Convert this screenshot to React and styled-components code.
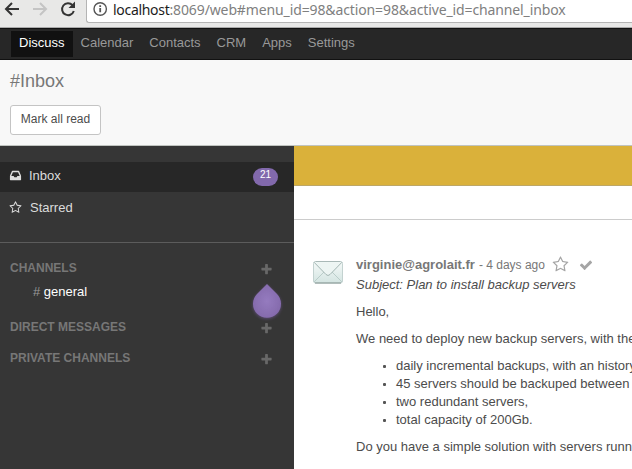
import React from "react";
import styled, { createGlobalStyle } from "styled-components";

const Global = createGlobalStyle`
  *, *::before, *::after { box-sizing: border-box; }
  html, body { margin: 0; padding: 0; overflow: hidden; }
  body { font: 13px/18px "Liberation Sans", Arial, sans-serif; color: #4c4c4c; background: #fff; }
`;

const Page = styled.div`
  width: 632px;
  height: 469px;
  display: flex;
  flex-direction: column;
  overflow: hidden;
`;

const BrowserBar = styled.div`
  height: 28px;
  flex: none;
  display: flex;
  background: #e8e8e7;
  border-bottom: 1px solid #aaa;
`;

const BrowserButtons = styled.div`
  width: 86px;
  flex: none;
  padding: 1px 0 0 4px;
  display: flex;
  gap: 12px;
`;

const AddressField = styled.div`
  flex: 1;
  height: 23px;
  display: flex;
  align-items: flex-start;
  gap: 5px;
  padding: 1px 0 0 6px;
  background: #fff;
  border: solid #b4b4b4;
  border-width: 0 0 1px 1px;
  border-bottom-left-radius: 3px;
`;

const Url = styled.span`
  font: 14px/17px "Noto Sans", sans-serif;
  letter-spacing: -0.12px;
  color: #808080;
  white-space: nowrap;
`;

const Host = styled.span`
  color: #1c1c1c;
  letter-spacing: -0.3px;
`;

const Navbar = styled.nav`
  height: 32px;
  flex: none;
  display: flex;
  padding: 2px 0 0 11px;
  background: #272727;
  border: solid #111;
  border-width: 1px 0;
`;

const NavItem = styled.a`
  height: 26px;
  padding: 0 8px;
  line-height: 24px;
  color: ${(p) => (p.$active ? "#fff" : "#999")};
  background: ${(p) => (p.$active ? "#111" : "transparent")};
`;

const ControlPanel = styled.header`
  height: 86px;
  flex: none;
  display: flex;
  flex-direction: column;
  align-items: flex-start;
  padding: 10px;
  background: #f8f8f8;
  border-bottom: 1px solid #c0c4c0;
`;

const Title = styled.h1`
  margin: 0 0 13px;
  font-size: 18px;
  font-weight: 400;
  line-height: 22px;
  color: #777;
`;

const Button = styled.button`
  width: 91px;
  height: 30px;
  padding: 0 0 2px;
  font: 12px "Liberation Sans", Arial, sans-serif;
  color: #4c4c4c;
  background: #fff;
  border: 1px solid #c4c4c4;
  border-radius: 3px;
`;

const Main = styled.div`
  flex: 1;
  min-height: 0;
  display: flex;
`;

const Sidebar = styled.aside`
  width: 294px;
  flex: none;
  padding-top: 16px;
  background: #363636;
`;

const MailboxRow = styled.div`
  height: ${(p) => (p.$active ? "30px" : "33px")};
  display: flex;
  align-items: center;
  gap: ${(p) => (p.$active ? "7px" : "8px")};
  padding: ${(p) => (p.$active ? "0 16px 3px 9px" : "0 16px 1px 9px")};
  color: #dcdcdc;
  background: ${(p) => (p.$active ? "#272727" : "transparent")};
`;

const Badge = styled.span`
  width: 25px;
  height: 18px;
  margin: 3px 0 0 auto;
  border-radius: 9px;
  background: #8269ac;
  color: #fff;
  font-size: 10px;
  line-height: 13px;
  text-align: center;
`;

const Divider = styled.div`
  height: 1px;
  margin: 17px 0 16px;
  background: #5c5c5c;
`;

const SectionRow = styled.div`
  height: 18px;
  display: flex;
  align-items: center;
  justify-content: space-between;
  padding: 0 21px 0 10px;
  margin-bottom: ${(p) => p.$gap || "0"};
  color: #777;
  font-size: 12px;
  font-weight: 700;
`;

const Channel = styled.div`
  position: relative;
  height: 18px;
  margin: 6px 0 17px;
  padding-left: 33px;
  color: #fff;
`;

const Hash = styled.span`
  color: #999;
`;

const Pointer = styled.svg`
  position: absolute;
  left: 249px;
  top: 0;
  overflow: visible;
`;

const Content = styled.main`
  flex: 1;
  min-width: 0;
  overflow: hidden;
`;

const Banner = styled.div`
  height: 40px;
  background: #dab13a;
  border-bottom: 1px solid #bda766;
`;

const Composer = styled.div`
  height: 34px;
  border-bottom: 1px solid #ccc;
`;

const Message = styled.article`
  display: flex;
  gap: 12px;
  padding: 36px 0 0 18px;
  white-space: nowrap;
`;

const Avatar = styled.svg`
  flex: none;
  margin-top: 4px;
`;

const Body = styled.div`
  flex: none;
`;

const MessageHeader = styled.div`
  height: 20px;
  display: flex;
  align-items: flex-start;
  color: #777;
`;

const Sender = styled.strong`
  margin-right: 4px;
`;

const Age = styled.span`
  margin-right: 7px;
  font-size: 12px;
`;

const Subject = styled.div`
  font-style: italic;
`;

const Paragraph = styled.p`
  margin: 9px 0;
`;

const List = styled.ul`
  margin: 0;
  padding: 0 0 0 27px;
  list-style: none;
`;

const ListItem = styled.li`
  display: flex;
  align-items: center;
  gap: 10px;
  &::before {
    content: "";
    width: 3px;
    height: 3px;
    margin-top: 1px;
    border-radius: 1px;
    background: #555;
  }
`;

const Glyph = styled.svg`
  flex: none;
  display: block;
  fill: ${(p) => p.$color || "currentColor"};
  margin: ${(p) => p.$margin || "0"};
`;

const glyphs = {
  inbox:
    "M1151 960h316q-1-3-2.5-8t-2.5-8l-212-496h-708l-212 496q-1 2-2.5 8t-2.5 8h316l95 192h320zm513 30v482q0 26-19 45t-45 19h-1408q-26 0-45-19t-19-45v-482q0-62 25-123l238-552q10-25 36.5-42t52.5-17h832q26 0 52.5 17t36.5 42l238 552q25 61 25 123z",
  star:
    "M1201 1004l306-297-422-62-189-382-189 382-422 62 306 297-73 421 378-199 377 199zm527-357q0 22-26 48l-363 354 86 500q1 7 1 20 0 50-41 50-19 0-40-12l-449-236-449 236q-22 12-40 12-21 0-31.5-14.5t-10.5-35.5q0-6 2-20l86-500-364-354q-25-27-25-48 0-37 56-46l502-73 225-455q19-41 49-41t49 41l225 455 502 73q56 9 56 46z",
  plus:
    "M1600 736v192q0 40-28 68t-68 28h-416v416q0 40-28 68t-68 28h-192q-40 0-68-28t-28-68v-416h-416q-40 0-68-28t-28-68v-192q0-40 28-68t68-28h416v-416q0-40 28-68t68-28h192q40 0 68 28t28 68v416h416q40 0 68 28t28 68z",
  check:
    "M1671 566q0 40-28 68l-724 724-136 136q-28 28-68 28t-68-28l-136-136-362-362q-28-28-28-68t28-68l136-136q28-28 68-28t68 28l294 295 656-657q28-28 68-28t68 28l136 136q28 28 28 68z",
};

function Icon({ name, size = 13, color, margin }) {
  return (
    <Glyph width={size} height={size} viewBox="0 0 1792 1792" $color={color} $margin={margin} aria-hidden="true">
      <path d={glyphs[name]} />
    </Glyph>
  );
}

function Arrow({ back }) {
  return (
    <svg width="16" height="16" viewBox="0 0 16 16" fill="none" stroke={back ? "#333" : "#c4c4c4"} strokeWidth="2">
      <path d={back ? "M15 8H2.5M8 2L2 8l6 6" : "M1 8h12.5M8 2l6 6-6 6"} />
    </svg>
  );
}

function Reload() {
  return (
    <svg width="16" height="16" viewBox="0 0 16 16">
      <path d="M12.5 4.1A6 6 0 1 0 13.8 10" fill="none" stroke="#333" strokeWidth="2" />
      <path d="M15 .5V7H8.5z" fill="#333" />
    </svg>
  );
}

function Info() {
  return (
    <svg width="15" height="16" viewBox="0 0 15 16">
      <circle cx="7.2" cy="8" r="6.2" fill="none" stroke="#555" strokeWidth="1.4" />
      <path d="M6.3 7h1.8v4.3H6.3zM6.3 4.3h1.8V6H6.3z" fill="#555" />
    </svg>
  );
}

function Envelope() {
  return (
    <Avatar width="32" height="25" viewBox="0 0 32 25">
      <defs>
        <linearGradient id="paper" x1="0" y1="0" x2="0" y2="1">
          <stop offset="0" stopColor="#f6faf9" />
          <stop offset="1" stopColor="#d3e4e1" />
        </linearGradient>
      </defs>
      <rect x="1.5" y="1.5" width="29" height="21.5" rx="2" fill="url(#paper)" stroke="#c3d2d0" />
      <path d="M2 22L12 12M30 22L20 12" fill="none" stroke="#bacdca" />
      <path d="M2 2.2L14 14.5q2 2 4 0L30 2.2" fill="#edf5f3" stroke="#a2b5b2" />
      <path d="M3.5 1.5h25" stroke="#a9b9b7" />
      <path d="M3 23h26" stroke="#82928f" />
    </Avatar>
  );
}

const menus = ["Discuss", "Calendar", "Contacts", "CRM", "Apps", "Settings"];
const requirements = [
  "daily incremental backups, with an history",
  "45 servers should be backuped between",
  "two redundant servers,",
  "total capacity of 200Gb.",
];

function Section({ label, gap }) {
  return (
    <SectionRow $gap={gap}>
      {label}
      <Icon name="plus" size={13} color="#686868" margin="3px 0 0" />
    </SectionRow>
  );
}

export default function App() {
  return (
    <Page>
      <Global />
      <BrowserBar>
        <BrowserButtons>
          <Arrow back />
          <Arrow />
          <Reload />
        </BrowserButtons>
        <AddressField>
          <Info />
          <Url>
            <Host>localhost</Host>:8069/web#menu_id=98&amp;action=98&amp;active_id=channel_inbox
          </Url>
        </AddressField>
      </BrowserBar>
      <Navbar>
        {menus.map((menu, i) => (
          <NavItem key={menu} $active={i === 0}>{menu}</NavItem>
        ))}
      </Navbar>
      <ControlPanel>
        <Title>#Inbox</Title>
        <Button>Mark all read</Button>
      </ControlPanel>
      <Main>
        <Sidebar>
          <MailboxRow $active>
            <Icon name="inbox" />
            Inbox
            <Badge>21</Badge>
          </MailboxRow>
          <MailboxRow>
            <Icon name="star" margin="0 0 2px" />
            Starred
          </MailboxRow>
          <Divider />
          <Section label="CHANNELS" />
          <Channel>
            <Hash>#</Hash> general
            <Pointer width="36" height="40" viewBox="0 0 36 40">
              <defs>
                <radialGradient id="drop">
                  <stop offset="0" stopColor="#957bbf" />
                  <stop offset="1" stopColor="#856bad" />
                </radialGradient>
                <filter id="glow" x="-30%" y="-30%" width="160%" height="160%">
                  <feDropShadow dx="0" dy="1" stdDeviation="1.5" floodColor="#6d5590" floodOpacity="0.7" />
                </filter>
              </defs>
              <path d="M18 1L28 11A14 14 0 1 1 8 11z" fill="url(#drop)" filter="url(#glow)" />
            </Pointer>
          </Channel>
          <Section label="DIRECT MESSAGES" gap="13px" />
          <Section label="PRIVATE CHANNELS" />
        </Sidebar>
        <Content>
          <Banner />
          <Composer />
          <Message>
            <Envelope />
            <Body>
              <MessageHeader>
                <Sender>virginie@agrolait.fr</Sender>
                <Age>- 4 days ago</Age>
                <Icon name="star" size={17} color="#a5a5a5" />
                <Icon name="check" size={14} color="#a5a5a5" margin="2px 0 0 10px" />
              </MessageHeader>
              <Subject>Subject: Plan to install backup servers</Subject>
              <Paragraph>Hello,</Paragraph>
              <Paragraph>We need to deploy new backup servers, with the</Paragraph>
              <List>
                {requirements.map((text) => (
                  <ListItem key={text}>{text}</ListItem>
                ))}
              </List>
              <Paragraph>Do you have a simple solution with servers runn</Paragraph>
            </Body>
          </Message>
        </Content>
      </Main>
    </Page>
  );
}
